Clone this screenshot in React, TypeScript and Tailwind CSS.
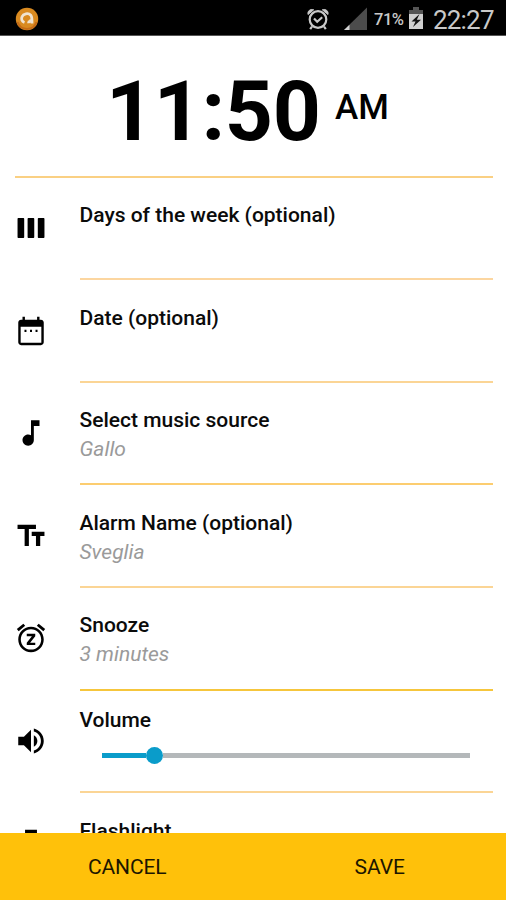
import type { ReactNode } from "react";

function Icon({ children }: { children: ReactNode }) {
  return (
    <svg viewBox="0 0 24 24" className="h-[34px] w-[34px] fill-black">
      {children}
    </svg>
  );
}

const icons = {
  week: (
    <Icon>
      <path d="M6.5 5H3.2c-.4 0-.7.3-.7.700v12.600c0 .4.3.7.7.7h3.300c.4 0 .7-.3.7-.7V5.700c0-.4-.3-.7-.7-.7zM20.800 5h-3.300c-.4 0-.7.3-.7.700v12.600c0 .4.3.7.7.7h3.300c.4 0 .7-.3.7-.7V5.700c0-.4-.3-.7-.7-.7zM13.600 5h-3.300c-.4 0-.7.300-.7.700v12.600c0 .4.3.7.7.7h3.300c.4 0 .7-.3.7-.7V5.700c0-.4-.3-.7-.7-.7z" />
    </Icon>
  ),
  date: (
    <Icon>
      <path d="M8.800 11.200H7.400v1.500h1.400zm3.900 0h-1.400v1.500h1.400zm3.900 0h-1.400v1.500h1.400zM19 4h-1V2h-1.700v2H7.700V2H6v2H5c-1.110 0-1.990.9-1.990 2L3 20c0 1.100.89 2 2 2h14c1.100 0 2-.9 2-2V6c0-1.100-.9-2-2-2zm.3 16.300H4.700V9h14.600v11.300z" />
    </Icon>
  ),
  music: (
    <Icon>
      <path d="M12 3v10.550c-.59-.34-1.270-.55-2-.55-2.210 0-4 1.790-4 4s1.790 4 4 4 4-1.790 4-4V7h4V3h-6z" />
    </Icon>
  ),
  text: (
    <Icon>
      <path d="M2.500 4v3h5v12h3V7h5V4h-13zm19 5h-9v3h3v7h3v-7h3V9z" />
    </Icon>
  ),
  snooze: (
    <Icon>
      <path d="M7.880 3.390L6.600 1.860 2 5.710l1.290 1.530 4.590-3.850zM22 5.720l-4.600-3.860-1.290 1.530 4.600 3.860L22 5.720zM12 4c-4.970 0-9 4.030-9 9s4.020 9 9 9c4.970 0 9-4.030 9-9s-4.030-9-9-9zm0 16.200c-4 0-7.200-3.200-7.200-7.200s3.200-7.200 7.200-7.200 7.200 3.200 7.200 7.200-3.200 7.200-7.200 7.200zM9 10.700h3.630L9 15.300V17h6v-1.700h-3.630L15 10.700V9H9z" />
    </Icon>
  ),
  volume: (
    <Icon>
      <path d="M3 9v6h4l5 5V4L7 9H3zm13.500 3c0-1.770-1.020-3.290-2.500-4.030v8.050c1.480-.73 2.500-2.250 2.500-4.020zM14 3.230v2.060c2.890.86 5 3.540 5 6.710s-2.110 5.850-5 6.710v2.060c4.010-.91 7-4.490 7-8.770s-2.990-7.860-7-8.770z" />
    </Icon>
  ),
  flash: (
    <Icon>
      <path d="M7.800 2h8.400v3H7.800zM7.800 6.500h8.400V9l-2 3v10H9.800V12l-2-3z" />
    </Icon>
  ),
};

function StatusBar() {
  return (
    <header className="flex h-[35px] shrink-0 items-center bg-black pr-3 pl-[15px] text-[#c9c9c9]">
      <svg viewBox="0 0 24 24" className="mt-[3px] h-6 w-6">
        <circle cx="12" cy="12" r="11.200" fill="#d98a20" />
        <path d="M2.500 15A10 10 0 0 0 21.500 15" fill="none" stroke="#c56b16" strokeWidth="2" />
        <path
          d="M9.500 15.500C6.700 14.500 6 12 7 9.800C8.300 6.600 13.300 5.600 15.800 8.200C17.200 9.700 17 12 17 16.500M16 12.500C15.500 14.500 14 15.300 12.500 14.800"
          fill="none"
          stroke="#f0e3d0"
          strokeWidth="2.800"
        />
      </svg>
      <svg viewBox="0 0 24 24" className="mt-0.5 ml-auto h-[24px] w-[24px]" fill="none" stroke="#c9c9c9" strokeWidth="2.200">
        <circle cx="12" cy="12.500" r="8.300" />
        <path d="M8 11.500l3.200 3.300 5-4.500M6 19.500l-1.800 2.700M18 19.500l1.800 2.700" />
        <path d="M2 7.500C1.300 4 4.300 1.500 7.700 2.800zM22 7.500C22.700 4 19.700 1.500 16.300 2.800z" fill="#c9c9c9" strokeWidth="1" />
      </svg>
      <svg viewBox="0 0 24 24" className="mt-[3px] ml-[14px] h-6 w-6">
        <path d="M23 0.500v22.500H0z" fill="#4c4c4c" />
        <path d="M5.500 17.700V23H0z" fill="#d4d4d4" />
      </svg>
      <span className="mt-[5px] ml-[6px] w-[32px] text-[16.500px] leading-none font-medium tracking-[-0.500px] whitespace-nowrap">
        71%
      </span>
      <svg viewBox="0 0 16 24" className="mt-px ml-[2px] h-6 w-4">
        <path d="M5 1h6v3h4v5H1V4h4z" fill="#555" />
        <path d="M1 8h14v15H1z" fill="#cfcfcf" />
        <path d="M11.500 8l-8 7.500h4L5 21l8-7.200H8.800z" fill="#111" />
      </svg>
      <span className="mt-[5px] ml-[9px] w-[61px] text-[26px] leading-none font-normal tracking-[-0.800px] whitespace-nowrap">
        22:27
      </span>
    </header>
  );
}

interface RowProps {
  icon: ReactNode;
  title: string;
  value?: string;
  line?: string;
  children?: ReactNode;
}

function Row({ icon, title, value, line = "border-[#fbd595]", children }: RowProps) {
  return (
    <section className="flex h-[102.600px] shrink-0 pr-[13px] pl-[14px]">
      <div className="flex w-[65.500px] shrink-0 items-center pb-[2px]">{icon}</div>
      <div className={`flex-1 border-b-2 ${line} ${children ? "pt-[17.300px]" : "pt-[25.300px]"}`}>
        <h2 className="text-[21px] leading-[25px] font-medium whitespace-nowrap text-[#0b0b0b]">{title}</h2>
        {value && (
          <p className="mt-1 text-[21px] leading-[25px] font-normal whitespace-nowrap text-[#9a9a9a] italic">{value}</p>
        )}
        {children}
      </div>
    </section>
  );
}

export default function App() {
  return (
    <div className="flex h-[900px] w-[506px] flex-col overflow-hidden bg-white font-['Roboto',sans-serif]">
      <StatusBar />
      <main className="flex min-h-0 flex-1 flex-col overflow-hidden border-t border-[#555]">
        <div className="mr-[13px] ml-[15px] flex h-[141.700px] shrink-0 border-b-2 border-[#fad083] pl-[91px] text-black">
          <span className="mt-[26px] w-[214px] text-[84px] leading-[100px] font-bold tracking-[-0.400px] whitespace-nowrap">
            11:50
          </span>
          <span className="mt-[51px] ml-[15px] text-[35px] leading-[42px] font-medium">AM</span>
        </div>
        <Row icon={icons.week} title="Days of the week (optional)" line="border-[#fcd6a0]" />
        <Row icon={icons.date} title="Date (optional)" />
        <Row icon={icons.music} title="Select music source" value="Gallo" line="border-[#fccd70]" />
        <Row icon={icons.text} title="Alarm Name (optional)" value="Sveglia" />
        <Row icon={icons.snooze} title="Snooze" value="3 minutes" line="border-[#f6c63c]" />
        <Row icon={icons.volume} title="Volume">
          <div className="mt-[14px] mr-[23px] ml-[22.500px] flex h-[17px] items-center">
            <div className="h-[5px] w-[44px] bg-[#0a9cca]" />
            <div className="h-[17px] w-[17px] rounded-full bg-[#0a9cca]" />
            <div className="h-[5px] flex-1 bg-[#b4b8ba]" />
          </div>
        </Row>
        <Row icon={icons.flash} title="Flashlight" />
      </main>
      <footer className="flex h-[67px] shrink-0 items-center bg-[#ffc10a] pt-0.5 pl-px text-[21px] text-[#1c1600]">
        <button className="h-full w-[253px] tracking-[-0.100px]">CANCEL</button>
        <button className="h-full w-[253px]">SAVE</button>
      </footer>
    </div>
  );
}
